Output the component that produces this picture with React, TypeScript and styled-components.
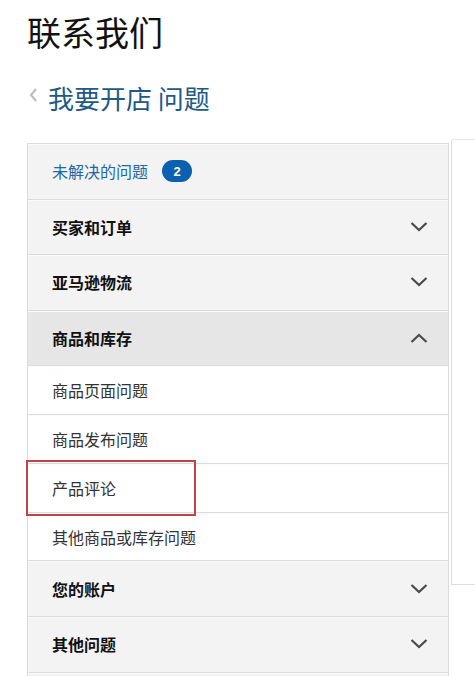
import React from "react";
import styled, { createGlobalStyle } from "styled-components";

const GlobalStyle = createGlobalStyle`
  html, body {
    margin: 0;
    padding: 0;
    background: #fff;
    font-family: "Noto Sans CJK SC", "Liberation Sans", sans-serif;
  }
`;

const Page = styled.div`
  width: 475px;
  height: 676px;
  overflow: hidden;
  padding-top: 10px;
  box-sizing: border-box;
`;

const Title = styled.h1`
  margin: 0 0 0 27px;
  font-size: 34px;
  font-weight: 400;
  line-height: 44px;
  color: #111;
`;

const Crumb = styled.div`
  display: flex;
  align-items: center;
  gap: 10px;
  margin: 26px 0 0 29px;
  font-size: 26px;
  line-height: 36px;
  color: #1d5a86;
`;

const Back = styled.svg`
  width: 9px;
  height: 14px;
  margin-top: -6px;
`;

const Body = styled.div`
  display: flex;
  align-items: flex-start;
  margin-top: 27px;
  gap: 2px;
`;

const Panel = styled.div`
  margin-left: 27px;
  width: 422px;
  border: 1px solid #dcdcdc;
  border-bottom: none;
  box-sizing: border-box;
`;

const Side = styled.div`
  flex: 1;
  height: 444px;
  margin-top: -4px;
  border-left: 1px solid #dedede;
  border-top: 1px solid #e6e6e6;
  border-bottom: 1px solid #dedede;
  border-top-left-radius: 3px;
`;

const Row = styled.div<{ $shade?: string; $tall?: boolean }>`
  display: flex;
  align-items: center;
  justify-content: space-between;
  height: ${(p) => (p.$tall ? 55.6 : 48.75)}px;
  padding: 0 20px 0 24px;
  box-sizing: border-box;
  background: ${(p) => p.$shade || "#fff"};
  border-bottom: 1px solid #dcdcdc;
  box-shadow: inset 0 1px 0 #fafafa;
`;

const Label = styled.span<{ $bold?: boolean; $blue?: boolean }>`
  display: flex;
  align-items: center;
  gap: 14px;
  font-size: 16px;
  font-weight: ${(p) => (p.$bold ? 700 : 400)};
  color: ${(p) => (p.$blue ? "#1e69a3" : p.$bold ? "#111" : "#333")};
`;

const Badge = styled.span`
  display: inline-flex;
  align-items: center;
  justify-content: center;
  width: 30px;
  height: 22px;
  border-radius: 11px;
  background: #0b60af;
  color: #fff;
  font-family: "Liberation Sans", sans-serif;
  font-size: 13px;
  font-weight: 700;
`;

const Marked = styled.div`
  position: relative;
`;

const RedBox = styled.div`
  position: absolute;
  left: -2px;
  top: -4px;
  width: 170px;
  height: 56px;
  border: 2px solid #bd444b;
  box-sizing: border-box;
  pointer-events: none;
`;

const Chevron = ({ up }: { up?: boolean }) => (
  <svg width="18" height="10" viewBox="0 0 18 10">
    <polyline
      points={up ? "1.5,9 9,2 16.5,9" : "1.5,1 9,8 16.5,1"}
      fill="none"
      stroke="#4a4a4a"
      strokeWidth="2.2"
    />
  </svg>
);

const App = () => {
  return (
    <Page>
      <GlobalStyle />
      <Title>联系我们</Title>
      <Crumb>
        <Back viewBox="0 0 9 14">
          <polyline points="7,1 2,7 7,13" fill="none" stroke="#bbb" strokeWidth="2" />
        </Back>
        <span>我要开店 问题</span>
      </Crumb>
      <Body>
        <Panel>
          <Row $tall $shade="#f3f3f3">
            <Label $blue>
              未解决的问题 <Badge>2</Badge>
            </Label>
          </Row>
          <Row $tall $shade="#f3f3f3">
            <Label $bold>买家和订单</Label>
            <Chevron />
          </Row>
          <Row $tall $shade="#f3f3f3">
            <Label $bold>亚马逊物流</Label>
            <Chevron />
          </Row>
          <Row $tall $shade="#e6e6e6">
            <Label $bold>商品和库存</Label>
            <Chevron up />
          </Row>
          <Row>
            <Label>商品页面问题</Label>
          </Row>
          <Row>
            <Label>商品发布问题</Label>
          </Row>
          <Marked>
            <Row>
              <Label>产品评论</Label>
            </Row>
            <RedBox />
          </Marked>
          <Row>
            <Label>其他商品或库存问题</Label>
          </Row>
          <Row $tall $shade="#f3f3f3">
            <Label $bold>您的账户</Label>
            <Chevron />
          </Row>
          <Row $tall $shade="#f3f3f3">
            <Label $bold>其他问题</Label>
            <Chevron />
          </Row>
          <Row $tall $shade="#f3f3f3" />
        </Panel>
        <Side />
      </Body>
    </Page>
  );
};

export default App;
